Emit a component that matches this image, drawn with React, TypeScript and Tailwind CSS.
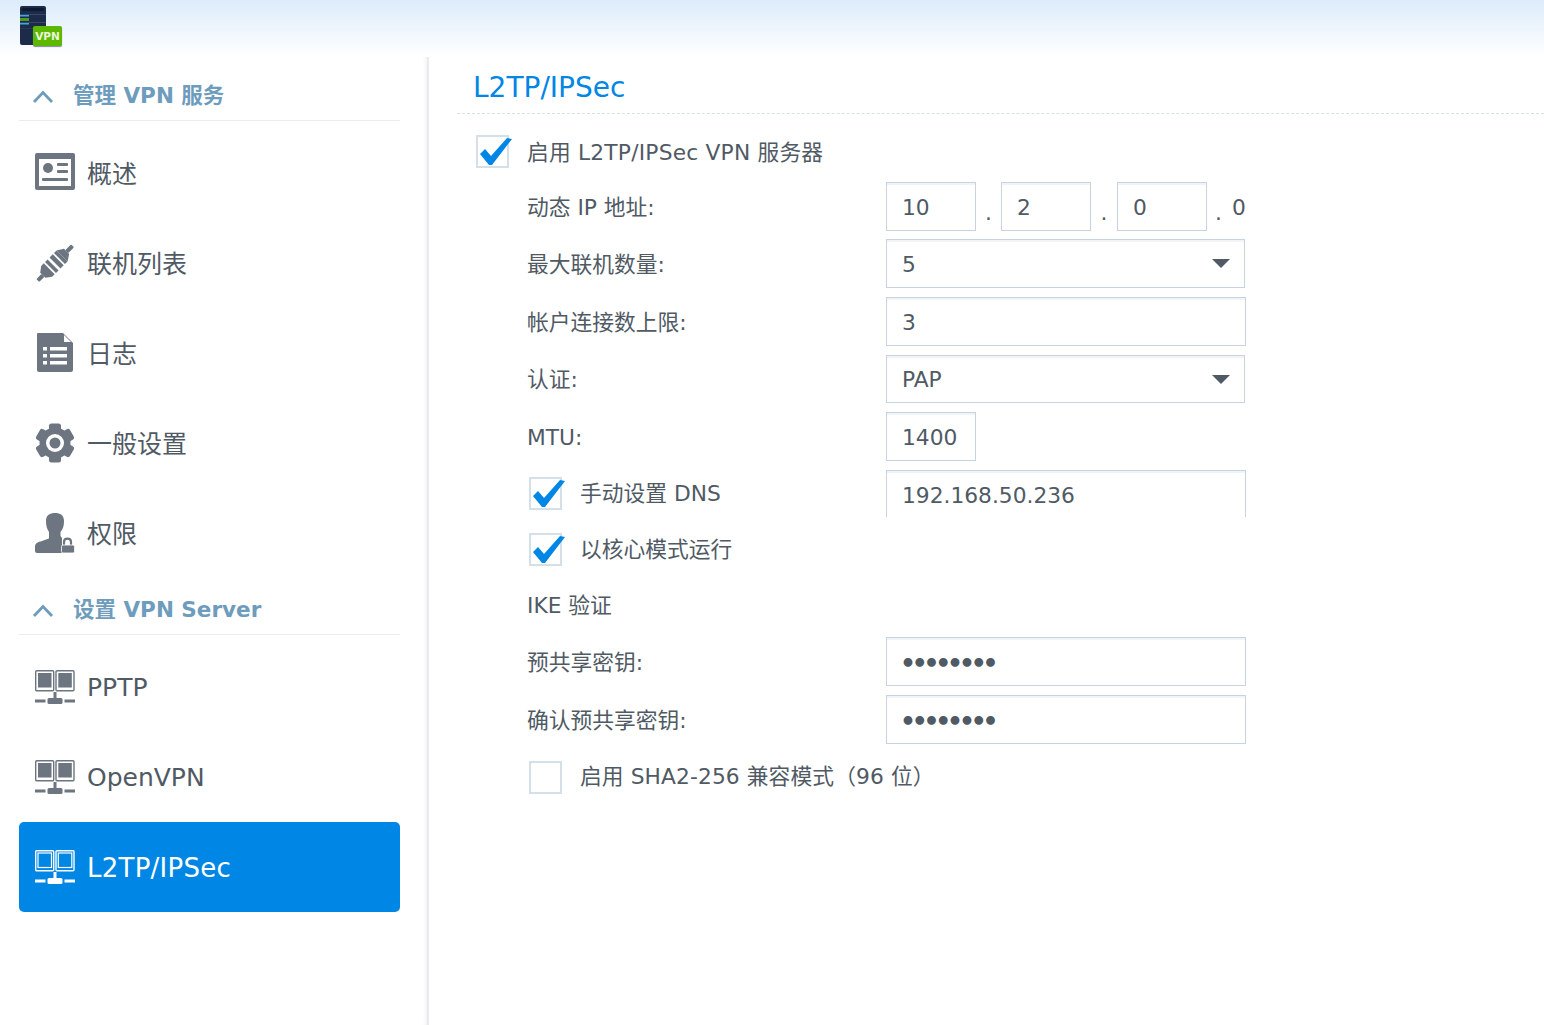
import React from "react";

const font = { fontFamily: '"DejaVu Sans", "Noto Sans CJK SC", sans-serif' };
const gray = "#6c7580";

function Chevron() {
  return (
    <svg width="24" height="16" viewBox="0 0 24 16" fill="none" className="ml-[12px] mt-[2px] shrink-0">
      <path d="M3 14 L12 4.5 L21 14" stroke="#6e9cbd" strokeWidth="2.8" />
    </svg>
  );
}

function CardIcon() {
  return (
    <svg width="40" height="40" viewBox="0 0 40 40">
      <rect x="0" y="0" width="40" height="37" rx="2" fill={gray} />
      <rect x="4" y="6" width="32" height="27" fill="#fff" />
      <circle cx="13" cy="15" r="5" fill={gray} />
      <rect x="22" y="10" width="11" height="3" rx="1" fill={gray} />
      <rect x="22" y="17" width="11" height="3" rx="1" fill={gray} />
      <rect x="7" y="25" width="26" height="3" rx="1" fill={gray} />
    </svg>
  );
}

function PlugIcon() {
  return (
    <svg width="40" height="40" viewBox="-2 -2 44 44">
      <g transform="rotate(-45 20 20)" fill={gray}>
        <rect x="-7" y="18" width="8" height="4.5" rx="1" />
        <path d="M1 16 L7 11.5 H11 V28.5 H7 L1 24 Z" />
        <rect x="13" y="11.5" width="4" height="17" />
        <rect x="20" y="11.5" width="5" height="17" />
        <rect x="27" y="11.5" width="4" height="17" />
        <path d="M31 11.5 L38 16 V24 L31 28.5 Z" />
        <rect x="38" y="18" width="9" height="4.5" rx="1" />
      </g>
    </svg>
  );
}

function DocIcon() {
  return (
    <svg width="40" height="40" viewBox="0 0 40 40">
      <path d="M3 0 H28 L38 10 V37 Q38 39 36 39 H4 Q2 39 2 37 V1 Q2 0 3 0 Z" fill={gray} />
      <path d="M29 2 L36 9 H29 Z" fill="#fff" />
      <rect x="8" y="14" width="4" height="3.5" fill="#fff" />
      <rect x="15" y="14" width="17" height="3.5" fill="#fff" />
      <rect x="8" y="21" width="4" height="3.5" fill="#fff" />
      <rect x="15" y="21" width="17" height="3.5" fill="#fff" />
      <rect x="8" y="28" width="4" height="3.5" fill="#fff" />
      <rect x="15" y="28" width="17" height="3.5" fill="#fff" />
    </svg>
  );
}

function GearIcon() {
  const angles = [0, 60, 120, 180, 240, 300];
  return (
    <svg width="40" height="40" viewBox="0 0 40 40">
      <circle cx="20" cy="20" r="15.5" fill={gray} />
      {angles.map((a) => (
        <rect key={a} x="14" y="0.5" width="12" height="8" rx="2.5" fill={gray} transform={`rotate(${a} 20 20)`} />
      ))}
      <circle cx="20" cy="20" r="9" fill="#fff" />
      <circle cx="20" cy="20" r="5.5" fill={gray} />
    </svg>
  );
}

function UserLockIcon() {
  return (
    <svg width="40" height="40" viewBox="0 0 40 40">
      <path d="M11 8 C11 2 15 0 20 0 C25 0 29 2 29 8 C29 13 28 16 25.5 19 V23 L27 25 V40 H2 Q0 40 0 38 V34 C0 30 3 29 7 28 L14 25.5 V19 C12 16 11 13 11 8 Z" fill={gray} />
      <path d="M29 33 V29 C29 24.5 36 24.5 36 29 V33" fill="none" stroke={gray} strokeWidth="2.2" />
      <rect x="26.5" y="32" width="13" height="8" rx="1.5" fill={gray} stroke="#fff" strokeWidth="0.8" />
    </svg>
  );
}

function NetworkIcon({ color }: { color: string }) {
  return (
    <svg width="40" height="34" viewBox="0 0 40 34">
      <rect x="0.7" y="0.7" width="18" height="20" rx="1" fill="none" stroke={color} strokeWidth="1.4" />
      <rect x="21" y="0.7" width="18" height="20" rx="1" fill="none" stroke={color} strokeWidth="1.4" />
      <rect x="3" y="3" width="13.5" height="14.5" fill={color === "#fff" ? "none" : color} stroke={color === "#fff" ? "#fff" : "none"} strokeWidth="1.2" />
      <rect x="23.3" y="3" width="13.5" height="14.5" fill={color === "#fff" ? "none" : color} stroke={color === "#fff" ? "#fff" : "none"} strokeWidth="1.2" />
      <rect x="18.5" y="22" width="3" height="7" fill={color} />
      <rect x="12.5" y="28" width="15" height="6" rx="1.5" fill={color} />
      <rect x="0" y="29.5" width="10.5" height="3" fill={color} />
      <rect x="29.5" y="29.5" width="10.5" height="3" fill={color} />
    </svg>
  );
}

function Logo() {
  return (
    <div className="relative w-[44px] h-[41px] ml-[19px] mt-[6px]">
      <svg width="28" height="40" viewBox="0 0 28 40">
        <rect x="1" y="0" width="26" height="39" rx="2" fill="#1d2b4a" />
        <rect x="3" y="2" width="22" height="3" rx="1" fill="#0f1a30" />
        <rect x="1" y="8" width="26" height="1" fill="#3a4763" />
        <rect x="1" y="9" width="9" height="1.5" fill="#38a9e4" />
        <rect x="1" y="12" width="9" height="3" fill="#4f9a25" />
        <rect x="1" y="16" width="26" height="1" fill="#3a4763" />
        <rect x="1" y="17" width="9" height="1.5" fill="#38a9e4" />
        <rect x="1" y="22" width="26" height="1" fill="#2b3958" />
      </svg>
      <div
        className="absolute left-[14px] top-[20px] w-[29px] h-[20px] pt-[2px] rounded-[2px] bg-[#5cb800] text-[#e8f8d8] text-[10.5px] font-bold flex items-center justify-center shadow-[0_1px_1px_#889]"
        style={font}
      >
        VPN
      </div>
    </div>
  );
}

function SectionHeader({ label }: { label: string }) {
  return (
    <div className="h-[57px] flex items-center pt-[5px] border-b border-[#e8edf1] gap-[18px]">
      <Chevron />
      <span className="pt-[4px] text-[21.5px] font-bold text-[#6e9cbd] whitespace-nowrap">{label}</span>
    </div>
  );
}

function NavItem({ icon, label, active, textClass = "text-[25px] pt-[4px]" }: { icon: React.ReactNode; label: string; active?: boolean; textClass?: string }) {
  return (
    <div className={`h-[90px] flex items-center pl-[16px] gap-[12px] rounded-[5px] ${active ? "bg-[#0086e5] text-white" : "text-[#505a64]"}`}>
      <div className="w-[40px] h-[40px] flex items-center justify-center shrink-0">{icon}</div>
      <span className={`whitespace-nowrap ${textClass}`}>{label}</span>
    </div>
  );
}

function Checkbox({ checked }: { checked?: boolean }) {
  return (
    <div className="relative w-[33px] h-[33px] border-2 border-[#d5dfe8] bg-white shrink-0">
      {checked && (
        <svg width="40" height="34" viewBox="0 0 40 34" className="absolute left-[-1px] top-[-1px]">
          <path d="M3 18 L8 13 L14 20 L30 2 L35 3 L15 29 L12 29 Z" fill="#0086e5" />
        </svg>
      )}
    </div>
  );
}

function Field({ children, className }: { children?: React.ReactNode; className?: string }) {
  return (
    <div className={`flex items-center pl-[15px] border border-[#c7d3e0] shadow-[inset_0_2px_0_#f1f4f7] ${className}`}>
      {children}
    </div>
  );
}

function Select({ value, className }: { value: string; className?: string }) {
  return (
    <Field className={`w-[359px] justify-between pr-[14px] ${className}`}>
      <span className="pt-[2px]">{value}</span>
      <svg width="18" height="9" viewBox="0 0 18 9">
        <path d="M0 0 H18 L9 9 Z" fill="#505a64" />
      </svg>
    </Field>
  );
}

function Row({ label, children, className }: { label: string; children: React.ReactNode; className?: string }) {
  return (
    <div className={`flex items-center ${className}`}>
      <span className="w-[359px] pt-[2px] whitespace-nowrap">{label}</span>
      {children}
    </div>
  );
}

function Dots() {
  return <span className="-ml-[2px] pt-[4px] text-[25px] tracking-[-4.2px] text-[#505a64] font-bold">••••••••</span>;
}

export default function App() {
  return (
    <div className="w-[1544px] h-[1025px] overflow-hidden bg-white flex flex-col" style={font}>
      <header className="h-[57px] bg-gradient-to-b from-[#dcecfa] to-white shrink-0">
        <Logo />
      </header>

      <div className="flex flex-1">
        <aside className="w-[429px] shrink-0 pl-[19px] pr-[27px] pt-[7px] border-r-2 border-[#e8eaec] shadow-[inset_-4px_0_4px_-3px_#eeeeee]">
          <SectionHeader label="管理 VPN 服务" />
          <div className="mt-[7px]">
            <NavItem icon={<CardIcon />} label="概述" />
            <NavItem icon={<PlugIcon />} label="联机列表" />
            <NavItem icon={<DocIcon />} label="日志" />
            <NavItem icon={<GearIcon />} label="一般设置" />
            <NavItem icon={<UserLockIcon />} label="权限" />
          </div>
          <SectionHeader label="设置 VPN Server" />
          <div className="mt-[7px]">
            <NavItem icon={<NetworkIcon color="#6c7580" />} label="PPTP" textClass="text-[25px] pt-[2px]" />
            <NavItem icon={<NetworkIcon color="#6c7580" />} label="OpenVPN" textClass="text-[25px] pt-[2px]" />
            <NavItem icon={<NetworkIcon color="#fff" />} label="L2TP/IPSec" active textClass="text-[26px] tracking-[0.25px] pt-[2px]" />
          </div>
        </aside>

        <main className="flex-1 pl-[28px] text-[21.75px] leading-[26px] text-[#505a64]">
          <div className="pt-[14px] pb-[8px] pl-[16px] border-b border-dashed border-[#d8dfe6]">
            <h1 className="text-[28px] leading-[34px] text-[#0086e5]">L2TP/IPSec</h1>
          </div>

          <div className="pl-[70px]">
            <div className="flex items-center mt-[21px] -ml-[51px] gap-[18px]">
              <Checkbox checked />
              <span className="pt-[2px] tracking-[0.2px]">启用 L2TP/IPSec VPN 服务器</span>
            </div>

            <Row label="动态 IP 地址:" className="mt-[14px]">
              <Field className="w-[90px] h-[49px] pt-[2px]">10</Field>
              <span className="w-[25px] text-center pt-[12px]">.</span>
              <Field className="w-[90px] h-[49px] pt-[2px]">2</Field>
              <span className="w-[26px] text-center pt-[12px]">.</span>
              <Field className="w-[90px] h-[49px] pt-[2px]">0</Field>
              <span className="ml-[8px] pt-[12px]">.</span>
              <span className="ml-[10px] pt-[2px]">0</span>
            </Row>

            <Row label="最大联机数量:" className="mt-[8px]">
              <Select value="5" className="h-[49px]" />
            </Row>
            <Row label="帐户连接数上限:" className="mt-[9px]">
              <Field className="w-[360px] h-[49px] pt-[2px]">3</Field>
            </Row>
            <Row label="认证:" className="mt-[9px]">
              <Select value="PAP" className="h-[48px]" />
            </Row>
            <Row label="MTU:" className="mt-[9px]">
              <Field className="w-[90px] h-[49px] pt-[2px]">1400</Field>
            </Row>

            <div className="flex items-center mt-[9px]">
              <div className="w-[359px] flex items-center gap-[18px] ml-[2px] mr-[-2px]">
                <Checkbox checked />
                <span>手动设置 DNS</span>
              </div>
              <Field className="w-[360px] h-[47px] border-b-0 pt-[3px]">192.168.50.236</Field>
            </div>

            <div className="flex items-center mt-[16px] gap-[18px] ml-[2px]">
              <Checkbox checked />
              <span>以核心模式运行</span>
            </div>

            <div className="mt-[24px] h-[32px] flex items-center">IKE 验证</div>

            <Row label="预共享密钥:" className="mt-[15px]">
              <Field className="w-[360px] h-[49px]"><Dots /></Field>
            </Row>
            <Row label="确认预共享密钥:" className="mt-[9px]">
              <Field className="w-[360px] h-[49px]"><Dots /></Field>
            </Row>

            <div className="flex items-center mt-[17px] gap-[18px] ml-[2px]">
              <Checkbox />
              <span className="pb-[2px] tracking-[0.1px]">启用 SHA2-256 兼容模式（96 位）</span>
            </div>
          </div>
        </main>
      </div>
    </div>
  );
}
